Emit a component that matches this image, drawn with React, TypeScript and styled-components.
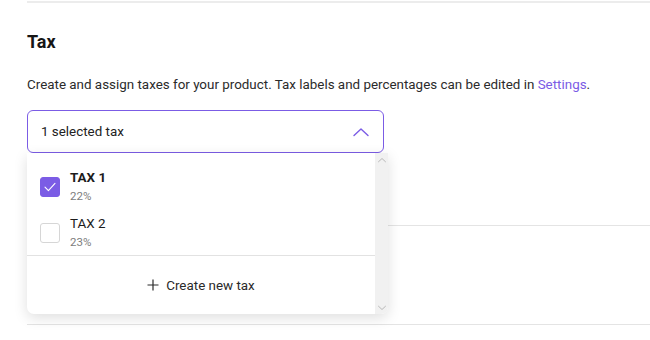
import { useState } from "react";
import styled, { createGlobalStyle } from "styled-components";

const GlobalStyle = createGlobalStyle`
  body {
    margin: 0;
    background: #ffffff;
    font-family: Roboto, "Liberation Sans", Arial, sans-serif;
    color: #1f1f1f;
  }
`;

const Page = styled.div`
  padding-left: 27px;
  width: 623px;
  min-height: 340px;
`;

const Divider = styled.div<{ $top?: number }>`
  height: 0;
  border-top: 1px solid #e4e4e4;
  margin-top: ${(p) => p.$top ?? 0}px;
`;

const TopRule = styled.div`
  height: 2px;
  margin-top: 1px;
  background: #ececec;
`;

const Section = styled.section`
  padding-top: 27px;
  height: 222px;
  box-sizing: border-box;
`;

const Title = styled.h2`
  margin: 0;
  font-size: 18px;
  line-height: 24px;
  font-weight: 700;
  color: #161616;
`;

const Description = styled.p`
  margin: 22px 0 0;
  font-size: 13.4px;
  line-height: 18px;
  color: #2b2b2b;
`;

const Link = styled.a`
  color: #7b5ce5;
  text-decoration: none;
`;

const SelectWrap = styled.div`
  position: relative;
  width: 357px;
  margin-top: 16px;
`;

const SelectBox = styled.div`
  height: 43px;
  box-sizing: border-box;
  border: 1.5px solid #7b5ce5;
  border-radius: 6px;
  display: flex;
  align-items: center;
  justify-content: space-between;
  padding: 0 14px 0 13px;
  font-size: 13.4px;
  color: #222;
`;

const Dropdown = styled.div`
  position: absolute;
  top: 100%;
  left: 0;
  width: 361px;
  height: 161px;
  display: flex;
  background: #fff;
  border-radius: 0 0 7px 7px;
  box-shadow: 0 4px 14px rgba(0, 0, 0, 0.13);
  overflow: hidden;
`;

const Content = styled.div`
  flex: 1;
  display: flex;
  flex-direction: column;
`;

const List = styled.div`
  padding-top: 10px;
  border-bottom: 1px solid #e2e2e2;
`;

const Item = styled.label`
  display: flex;
  align-items: center;
  gap: 10px;
  padding: 6px 13px 4px;
  cursor: pointer;
`;

const Box = styled.span<{ $checked: boolean }>`
  width: 20px;
  height: 20px;
  box-sizing: border-box;
  border-radius: 3px;
  border: 1px solid ${(p) => (p.$checked ? "#7b5ce5" : "#d6d6d6")};
  background: ${(p) => (p.$checked ? "#7b5ce5" : "#fff")};
  display: flex;
  align-items: center;
  justify-content: center;
`;

const ItemText = styled.div`
  display: flex;
  flex-direction: column;
`;

const ItemName = styled.span<{ $bold: boolean }>`
  font-size: 13.4px;
  line-height: 18px;
  font-weight: ${(p) => (p.$bold ? 700 : 400)};
  color: #1c1c1c;
`;

const ItemPct = styled.span`
  font-size: 11.5px;
  line-height: 18px;
  color: #7d7d7d;
`;

const CreateRow = styled.div`
  flex: 1;
  display: flex;
  align-items: center;
  justify-content: center;
  gap: 7px;
  font-size: 13.4px;
  color: #2a2a2a;
`;

const Rail = styled.div`
  width: 13px;
  background: #f1f1f1;
  display: flex;
  flex-direction: column;
  justify-content: space-between;
  align-items: center;
  padding: 4px 0 3px;
`;

const taxes = [
  { id: 1, name: "TAX 1", rate: "22%" },
  { id: 2, name: "TAX 2", rate: "23%" },
];

function Chevron({ up, size, color, width }: { up: boolean; size: number; color: string; width: number }) {
  return (
    <svg width={size} height={size / 2 + 2} viewBox="0 0 16 10" fill="none">
      <path
        d={up ? "M1 8.5 L8 2 L15 8.5" : "M1 1.5 L8 8 L15 1.5"}
        stroke={color}
        strokeWidth={width}
        strokeLinecap="round"
        strokeLinejoin="round"
      />
    </svg>
  );
}

export default function App() {
  const [selected, setSelected] = useState<number[]>([1]);

  const toggle = (id: number) =>
    setSelected((s) => (s.includes(id) ? s.filter((x) => x !== id) : [...s, id]));

  return (
    <>
      <GlobalStyle />
      <Page>
        <TopRule />
        <Section>
          <Title>Tax</Title>
          <Description>
            Create and assign taxes for your product. Tax labels and percentages can be edited in{" "}
            <Link href="#">Settings</Link>.
          </Description>
          <SelectWrap>
            <SelectBox>
              <span>{selected.length} selected tax</span>
              <Chevron up size={16} color="#7b5ce5" width={1.4} />
            </SelectBox>
            <Dropdown>
              <Content>
                <List>
                  {taxes.map((t) => {
                    const on = selected.includes(t.id);
                    return (
                      <Item key={t.id} onClick={() => toggle(t.id)}>
                        <Box $checked={on}>
                          {on && (
                            <svg width="14" height="14" viewBox="0 0 14 14" fill="none">
                              <path d="M2 7.2 L5.4 10.6 L12 3.4" stroke="#fff" strokeWidth="1.1" strokeLinecap="round" strokeLinejoin="round" />
                            </svg>
                          )}
                        </Box>
                        <ItemText>
                          <ItemName $bold={on}>{t.name}</ItemName>
                          <ItemPct>{t.rate}</ItemPct>
                        </ItemText>
                      </Item>
                    );
                  })}
                </List>
                <CreateRow>
                  <svg width="12" height="12" viewBox="0 0 12 12" fill="none">
                    <path d="M6 0.5 V11.5 M0.5 6 H11.5" stroke="#2a2a2a" strokeWidth="1.2" />
                  </svg>
                  <span>Create new tax</span>
                </CreateRow>
              </Content>
              <Rail>
                <Chevron up size={8} color="#b8b8b8" width={2} />
                <Chevron up={false} size={8} color="#b8b8b8" width={2} />
              </Rail>
            </Dropdown>
          </SelectWrap>
        </Section>
        <Divider />
        <Divider $top={98} />
      </Page>
    </>
  );
}
